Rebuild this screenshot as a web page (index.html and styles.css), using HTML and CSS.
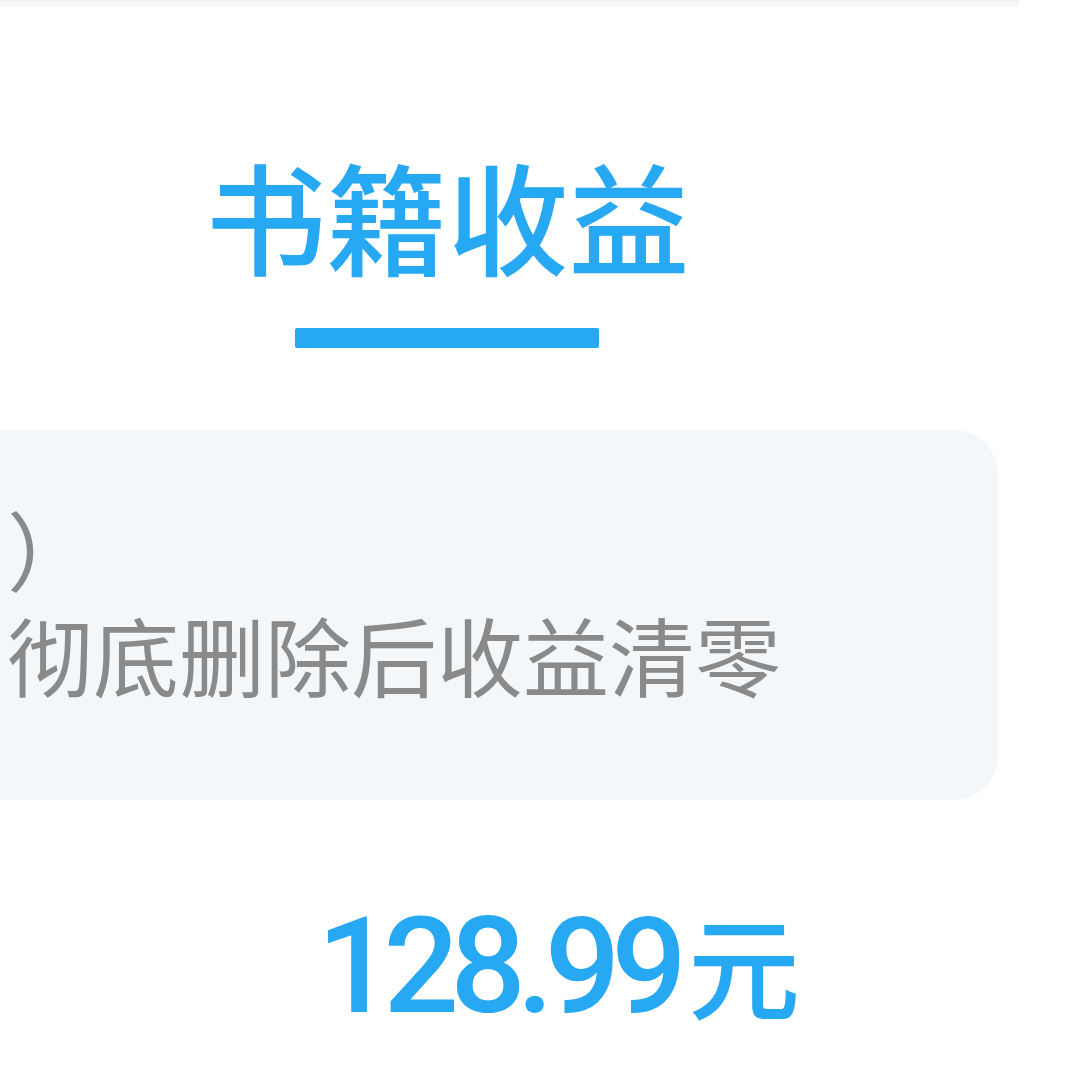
FILE: index.html
```html
<!DOCTYPE html>
<html lang="zh-CN">
<head>
<meta charset="utf-8">
<title>书籍收益</title>
<link rel="stylesheet" href="styles.css">
</head>
<body>
<div class="page">
  <div class="top-card"></div>
  <div class="tab">
    <div class="tab-title">书籍收益</div>
    <div class="tab-bar"></div>
  </div>
  <div class="notice">
    <div class="notice-line">）</div>
    <div class="notice-line">彻底删除后收益清零</div>
  </div>
  <div class="amount"><span class="amount-num">128.99</span><span class="amount-unit">元</span></div>
</div>
</body>
</html>
```

FILE: styles.css
```css
html, body {
  margin: 0;
  padding: 0;
  background: #ffffff;
}
body {
  width: 1080px;
  height: 1089px;
  overflow: hidden;
  font-family: "Noto Sans CJK SC", "Noto Sans", sans-serif;
}
.page {
  display: flex;
  flex-direction: column;
  width: 1080px;
}
.top-card {
  height: 7px;
  width: 1100px;
  margin-left: -80px;
  background: linear-gradient(#f2f2f2, #f8f8f8);
  border-bottom-right-radius: 20px;
}
.tab {
  width: 895px;
  display: flex;
  flex-direction: column;
  align-items: center;
  margin-top: 146px;
}
.tab-title {
  font-size: 121px;
  line-height: 121px;
  font-weight: 500;
  color: #27a8f2;
  white-space: nowrap;
}
.tab-bar {
  width: 304px;
  height: 20px;
  margin-top: 54px;
  margin-left: -1px;
  background: #27a8f2;
  border-radius: 2px;
}
.notice {
  box-sizing: border-box;
  margin-top: 82px;
  margin-left: -230px;
  width: 1228px;
  padding: 65px 0 93px 237px;
  background: #f3f7fa;
  border-radius: 44px;
}
.notice-line {
  font-size: 86px;
  line-height: 106px;
  color: #8a8a8a;
  white-space: nowrap;
}
.amount {
  margin-top: 100px;
  padding-left: 317px;
  line-height: 133px;
  color: #27a8f2;
  white-space: nowrap;
}
.amount-num {
  font-family: Roboto, "Noto Sans", sans-serif;
  font-weight: 500;
  font-size: 133px;
  letter-spacing: -9px;
}
.amount-unit {
  font-family: "Noto Sans CJK SC", sans-serif;
  font-weight: 500;
  font-size: 112px;
  line-height: 1;
  margin-left: 10px;
}
```
